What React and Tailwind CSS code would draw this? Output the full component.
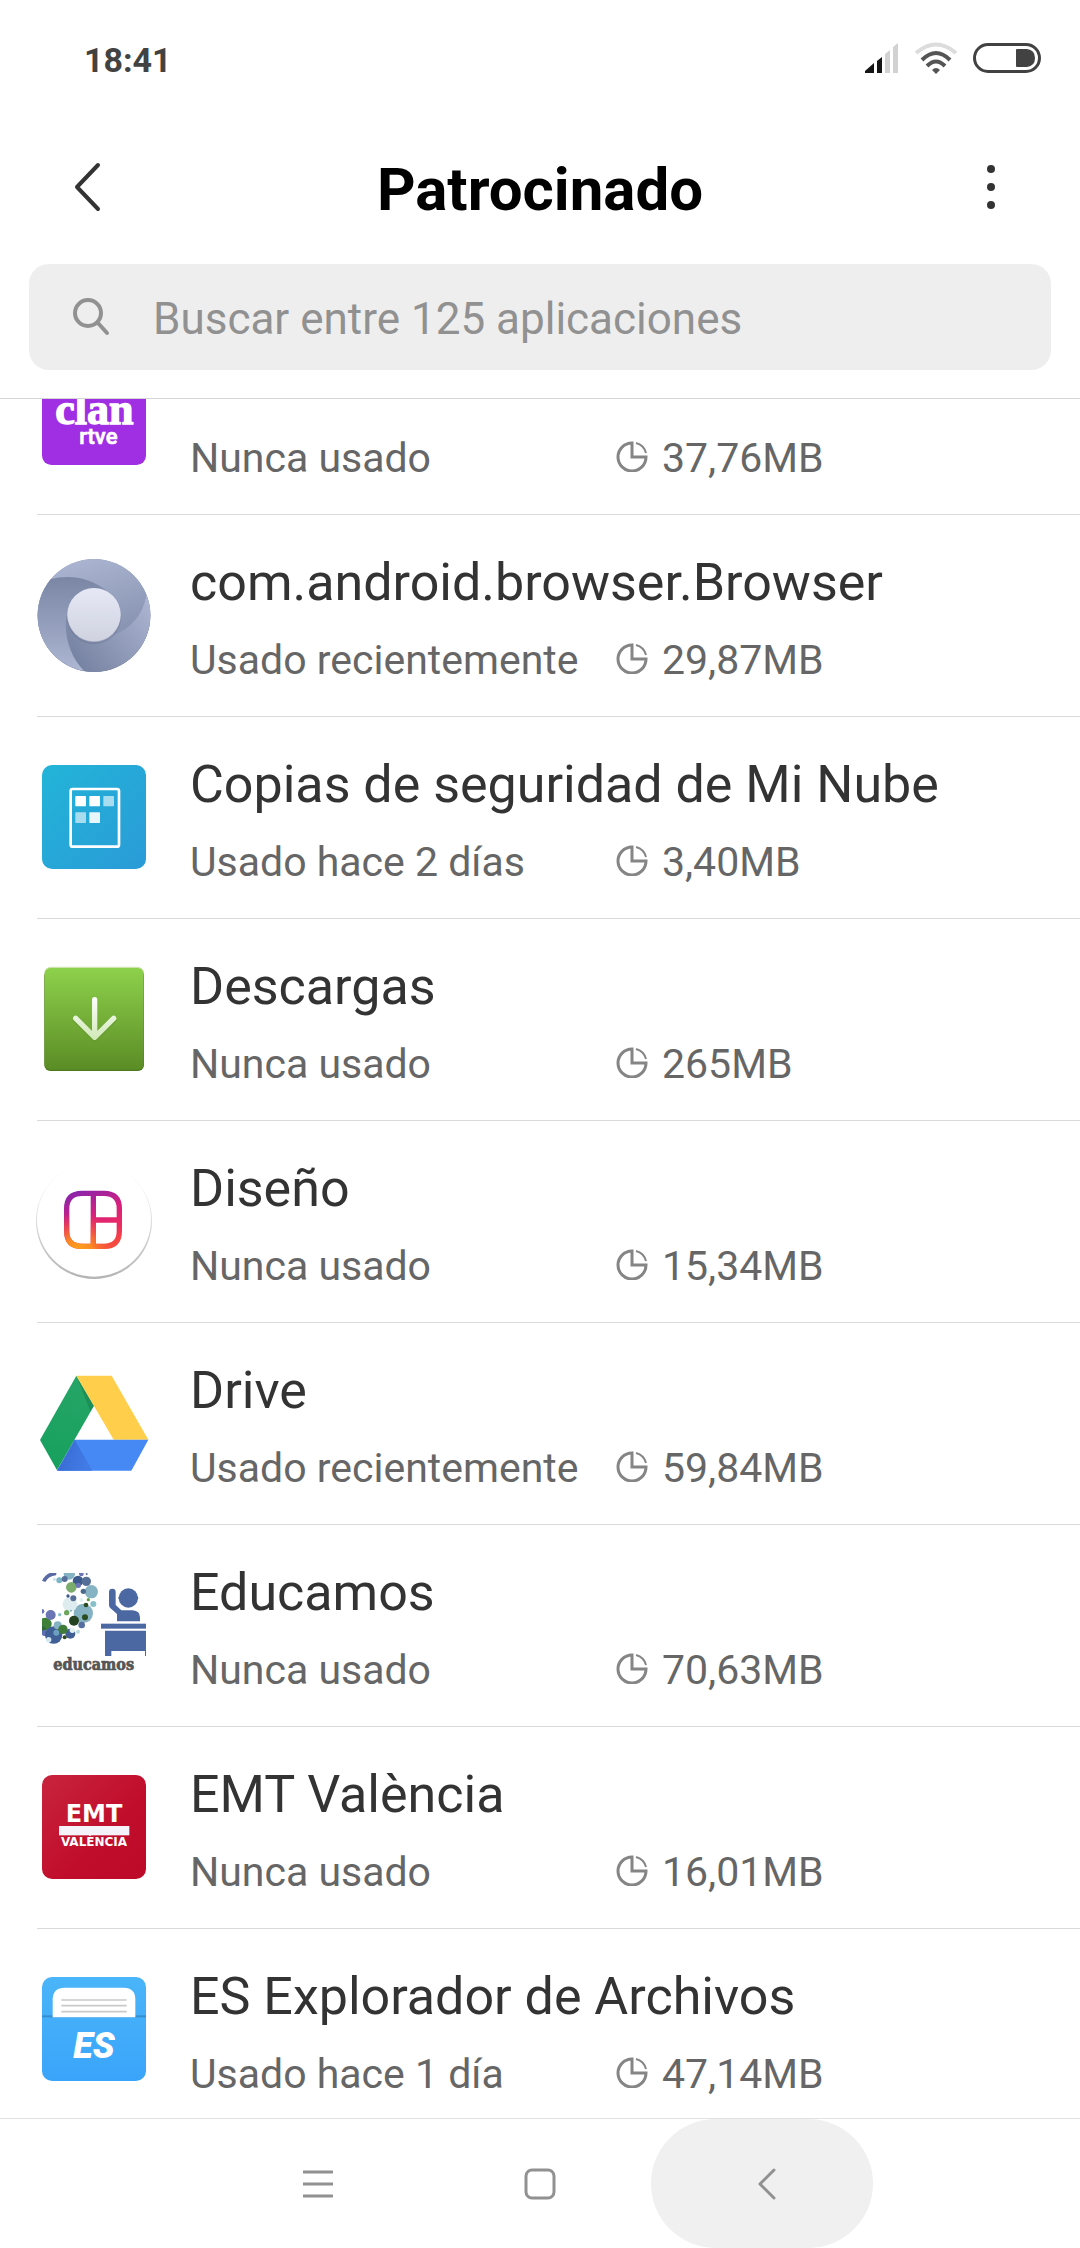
import React from "react";

function AppIcon({ viewBox, children }) {
  return (
    <svg viewBox={viewBox} className="mt-[42px] h-[117px] w-[114px] shrink-0 overflow-visible" aria-hidden="true">
      {children}
    </svg>
  );
}

function ClanIcon() {
  return (
    <AppIcon viewBox="111 -75 342 351">
      <rect x="126" y="-57" width="312" height="312" rx="28" fill="#a02fe4" />
      <text x="283" y="132" textAnchor="middle" fontSize="132" fontWeight="700" fill="#fff" stroke="#fff" strokeWidth="4" fontFamily="'Liberation Serif', serif">clan</text>
      <text x="295" y="193" textAnchor="middle" fontSize="66" fontWeight="500" fill="#fff" stroke="#fff" strokeWidth="2" fontFamily="Roboto, sans-serif">rtve</text>
    </AppIcon>
  );
}

function BrowserIcon() {
  return (
    <AppIcon viewBox="111 531 342 351">
      <defs>
        <linearGradient id="brTop" x1="0" y1="0" x2="0.3" y2="1">
          <stop offset="0" stopColor="#b0bad6" />
          <stop offset="1" stopColor="#7d89a8" />
        </linearGradient>
        <linearGradient id="brLeft" x1="0" y1="0" x2="0" y2="1">
          <stop offset="0" stopColor="#7a86a5" />
          <stop offset="1" stopColor="#aeb8d5" />
        </linearGradient>
        <linearGradient id="brRight" x1="1" y1="0" x2="0" y2="0.7">
          <stop offset="0" stopColor="#b0b9d6" />
          <stop offset="1" stopColor="#7682a1" />
        </linearGradient>
        <linearGradient id="brMid" x1="0" y1="0" x2="0" y2="1">
          <stop offset="0" stopColor="#e6e9f5" />
          <stop offset="1" stopColor="#cfd2df" />
        </linearGradient>
        <clipPath id="brClip"><circle cx="282" cy="706" r="169" /></clipPath>
      </defs>
      <circle cx="282" cy="707" r="169" fill="#6d7998" />
      <g clipPath="url(#brClip)">
        <rect x="111" y="535" width="342" height="342" fill="url(#brTop)" />
        <path d="M440 640C432 700 395 748 330 770L195 700Q192 800 252 880L460 880L460 640Z" fill="url(#brRight)" />
        <path d="M148 598C210 582 265 592 318 630L282 706L200 706C188 770 212 830 252 872L100 880L100 620Z" fill="url(#brLeft)" />
      </g>
      <circle cx="282" cy="711" r="82" fill="#5c6887" opacity="0.25" />
      <circle cx="282" cy="706" r="80" fill="#aeb3c6" />
      <circle cx="282" cy="704" r="80" fill="url(#brMid)" />
    </AppIcon>
  );
}

function CloudBackupIcon() {
  return (
    <AppIcon viewBox="111 57 342 351">
      <defs>
        <linearGradient id="cbBg" x1="0" y1="0" x2="1" y2="1">
          <stop offset="0" stopColor="#22b4d8" />
          <stop offset="1" stopColor="#2a9bd7" />
        </linearGradient>
      </defs>
      <rect x="126" y="75" width="312" height="312" rx="30" fill="url(#cbBg)" />
      <rect x="212" y="147" width="145" height="173" rx="6" fill="none" stroke="#fff" strokeWidth="8" />
      <g fill="#fff">
        <rect x="226" y="168" width="32" height="31" rx="2" />
        <rect x="268" y="168" width="32" height="31" rx="2" />
        <rect x="310" y="168" width="32" height="31" rx="2" opacity="0.6" />
        <rect x="226" y="217" width="32" height="32" rx="2" opacity="0.6" />
        <rect x="268" y="217" width="32" height="32" rx="2" opacity="0.9" />
      </g>
    </AppIcon>
  );
}

function DownloadsIcon() {
  return (
    <AppIcon viewBox="111 663 342 351">
      <defs>
        <linearGradient id="dlBg" x1="0" y1="0" x2="0" y2="1">
          <stop offset="0" stopColor="#8ed14b" />
          <stop offset="1" stopColor="#5b8c25" />
        </linearGradient>
        <linearGradient id="dlArrow" gradientUnits="userSpaceOnUse" x1="0" y1="770" x2="0" y2="902">
          <stop offset="0" stopColor="#ffffff" />
          <stop offset="1" stopColor="#cfe8b5" />
        </linearGradient>
      </defs>
      <rect x="133" y="680" width="299" height="312" rx="20" fill="#cfe3b0" />
      <rect x="133" y="690" width="299" height="303" rx="18" fill="#4c7a1c" />
      <rect x="134" y="684" width="297" height="305" rx="17" fill="url(#dlBg)" />
      <g fill="none" strokeWidth="16" strokeLinecap="round" strokeLinejoin="round">
        <path d="M284 782V892M227 840L284 896L341 840" stroke="#4c7a1c" opacity="0.3" />
        <path d="M284 779V892M227 835L284 892L341 835" stroke="url(#dlArrow)" />
      </g>
    </AppIcon>
  );
}

function LayoutIcon() {
  return (
    <AppIcon viewBox="111 69 342 351">
      <defs>
        <linearGradient id="loShade" x1="0" y1="0" x2="0" y2="1">
          <stop offset="0" stopColor="#f0f0f0" />
          <stop offset="0.5" stopColor="#dcdcdc" />
          <stop offset="1" stopColor="#b4b4b4" />
        </linearGradient>
        <linearGradient id="loA" gradientUnits="userSpaceOnUse" x1="235" y1="155" x2="300" y2="325">
          <stop offset="0" stopColor="#8c24aa" />
          <stop offset="0.45" stopColor="#d8207c" />
          <stop offset="0.75" stopColor="#ec2a62" />
          <stop offset="1" stopColor="#f5483f" />
        </linearGradient>
        <radialGradient id="loB" gradientUnits="userSpaceOnUse" cx="235" cy="335" r="120">
          <stop offset="0" stopColor="#ffa51c" />
          <stop offset="0.35" stopColor="#fb8a22" />
          <stop offset="1" stopColor="#f5483f" stopOpacity="0" />
        </radialGradient>
      </defs>
      <circle cx="282" cy="243" r="174" fill="url(#loShade)" />
      <circle cx="282" cy="239" r="171" fill="#fff" />
      {["url(#loA)", "url(#loB)"].map((stroke) => (
        <path key={stroke} d="M246 160H312Q358 160 358 206V273Q358 319 312 319H246Q200 319 200 273V206Q200 160 246 160ZM280 160V319M280 240H358" fill="none" stroke={stroke} strokeWidth="16" />
      ))}
    </AppIcon>
  );
}

function DriveIcon() {
  return (
    <AppIcon viewBox="111 675 342 351">
      <defs>
        <linearGradient id="drG" x1="0.5" y1="0" x2="0.3" y2="1">
          <stop offset="0" stopColor="#25a567" />
          <stop offset="1" stopColor="#17a05d" />
        </linearGradient>
        <linearGradient id="drShade" x1="0" y1="0" x2="1" y2="0.3">
          <stop offset="0" stopColor="#3768cf" />
          <stop offset="1" stopColor="#427be6" />
        </linearGradient>
      </defs>
      <path d="M229 707L120 900L171 991L282 797Z" fill="url(#drG)" />
      <path d="M229 707L282 797L271 814Z" fill="#146b43" opacity="0.35" />
      <path d="M229 707H335L445 899H341Z" fill="#ffcf4c" />
      <path d="M224 899H445L394 992H171Z" fill="#4688f4" />
      <path d="M224 899L277 992H171Z" fill="url(#drShade)" />
    </AppIcon>
  );
}

const bubbles = [
  [190, 190, 29, "#86b3c3"], [214, 125, 20, "#86b3c3"], [150, 163, 22, "#deebef"], [174, 93, 16, "#3c5a8c"],
  [199, 94, 14, "#566f98"], [148, 72, 17, "#86b3c3"], [154, 112, 16, "#7cab6e"], [118, 91, 9, "#7db5c4"],
  [134, 87, 9, "#566f98"], [175, 106, 8, "#6b74b4"], [184, 72, 7, "#6b74b4"], [190, 124, 8, "#4c6b8c"],
  [160, 145, 9, "#566f98"], [144, 138, 5, "#3c5a8c"], [220, 162, 9, "#86c0c9"], [198, 165, 7, "#2c4c20"],
  [205, 149, 5, "#5fa045"], [140, 188, 8, "#6da55a"], [119, 194, 5, "#86c0c9"], [92, 195, 15, "#6b74b4"],
  [195, 202, 9, "#2c4c20"], [185, 225, 10, "#566fa0"], [151, 251, 15, "#3f5f96"], [101, 255, 26, "#3f5f96"],
  [113, 226, 12, "#86b3c3"], [174, 245, 6, "#b9dcdf"], [109, 248, 9, "#6d9fc0"], [129, 238, 14, "#3f7a38"],
  [162, 212, 15, "#254220"], [134, 262, 6, "#2c4c20"], [86, 269, 8, "#d5e8f2"], [157, 241, 8, "#e3f0f0"],
  [184, 150, 6, "#e3f0f0"], [153, 182, 3, "#7db5c4"], [103, 88, 5, "#cfe6ec"], [200, 72, 3, "#566f98"],
];

function EducamosIcon() {
  return (
    <AppIcon viewBox="51 51 342 351">
      <defs>
        <clipPath id="edClip"><rect x="66" y="69" width="312" height="312" /></clipPath>
      </defs>
      <g clipPath="url(#edClip)">
        <circle cx="76" cy="222" r="19" fill="#3f8038" />
        <circle cx="67" cy="240" r="11" fill="#2f6b3a" />
        <circle cx="74" cy="249" r="9" fill="#5f6fb4" />
        <circle cx="66" cy="184" r="7" fill="#6b74b4" />
        <path d="M66 92Q80 64 110 66L108 76Q86 78 76 96Z" fill="#5a6aa4" />
        {bubbles.map(([x, y, r, fill]) => (
          <circle key={`${x}-${y}`} cx={x} cy={y} r={r} fill={fill} />
        ))}
        <g fill="#4c68a2">
          <circle cx="325" cy="144" r="29" />
          <circle cx="300" cy="144" r="5" />
          <circle cx="350" cy="144" r="5" />
          <path d="M267 126Q267 116 277 116Q287 116 287 126V165L304 181H338Q360 183 360 202V214H291V192L270 173Q267 170 267 165Z" />
          <rect x="243" y="221" width="136" height="15" />
          <path d="M255 242H378V318H375V303H274V318H255Z" />
        </g>
      </g>
      <text x="221" y="359" textAnchor="middle" fontSize="48" fontWeight="700" fill="#555" stroke="#555" strokeWidth="2" fontFamily="'DejaVu Serif Condensed', 'Liberation Serif', serif">educamos</text>
    </AppIcon>
  );
}

function EmtIcon() {
  return (
    <AppIcon viewBox="51 57 342 351">
      <defs>
        <linearGradient id="emBg" x1="0" y1="0" x2="1" y2="1">
          <stop offset="0" stopColor="#c8243e" />
          <stop offset="0.6" stopColor="#c00d2b" />
          <stop offset="1" stopColor="#bd0a28" />
        </linearGradient>
      </defs>
      <rect x="66" y="75" width="312" height="312" rx="30" fill="url(#emBg)" />
      <text x="222" y="216" textAnchor="middle" fontSize="72" fontWeight="700" fill="#fff" fontFamily="'DejaVu Sans', sans-serif">EMT</text>
      <rect x="117" y="228" width="211" height="28" fill="#f5f3fa" />
      <text x="222" y="289" textAnchor="middle" fontSize="36" fontWeight="700" fill="#fff" fontFamily="'DejaVu Sans', sans-serif">VALÈNCIA</text>
    </AppIcon>
  );
}

function EsIcon() {
  return (
    <AppIcon viewBox="51 63 342 351">
      <defs>
        <linearGradient id="esBg" x1="0" y1="0" x2="0" y2="1">
          <stop offset="0" stopColor="#4ab5f9" />
          <stop offset="1" stopColor="#3aa4fa" />
        </linearGradient>
      </defs>
      <rect x="66" y="81" width="312" height="312" rx="30" fill="url(#esBg)" />
      <rect x="66" y="196" width="312" height="6" fill="#348fd2" />
      <path d="M98 202V146Q100 113 134 113H312Q345 114 346 146V202Z" fill="#fff" />
      <path d="M124 150H320M124 167H320M124 185H320" stroke="#c9c9c9" strokeWidth="5" />
      <text x="222" y="325" textAnchor="middle" fontSize="108" fontWeight="900" fontStyle="italic" fill="#fff" fontFamily="Roboto, sans-serif">ES</text>
    </AppIcon>
  );
}

const apps = [
  { used: "Nunca usado", size: "37,76MB", Icon: ClanIcon },
  { name: "com.android.browser.Browser", used: "Usado recientemente", size: "29,87MB", Icon: BrowserIcon },
  { name: "Copias de seguridad de Mi Nube", used: "Usado hace 2 días", size: "3,40MB", Icon: CloudBackupIcon },
  { name: "Descargas", used: "Nunca usado", size: "265MB", Icon: DownloadsIcon },
  { name: "Diseño", used: "Nunca usado", size: "15,34MB", Icon: LayoutIcon },
  { name: "Drive", used: "Usado recientemente", size: "59,84MB", Icon: DriveIcon },
  { name: "Educamos", used: "Nunca usado", size: "70,63MB", Icon: EducamosIcon },
  { name: "EMT València", used: "Nunca usado", size: "16,01MB", Icon: EmtIcon },
  { name: "ES Explorador de Archivos", used: "Usado hace 1 día", size: "47,14MB", Icon: EsIcon },
];

function PieIcon() {
  return (
    <svg viewBox="0 0 32 32" className="mb-1 h-8 w-8 shrink-0" fill="none" stroke="#858585" strokeWidth="3" aria-hidden="true">
      <path d="M16 3A14 14 0 1 0 30 17H16Z" />
      <path d="M20 3A14 14 0 0 1 30 13" strokeWidth="2" />
    </svg>
  );
}

function AppRow({ name, used, size, Icon }) {
  return (
    <li className="ml-[37px] flex h-[202px] gap-[39px] border-b border-[#d9d9d9]">
      <Icon />
      <div className="flex min-w-0 flex-1 flex-col justify-end gap-[23px] pb-8">
        {name && <h2 className="truncate text-[52px] leading-[60px] text-[#333]">{name}</h2>}
        <div className="flex items-center text-[41px] leading-[48px] text-[#666]">
          <span className="w-[426px] shrink-0 whitespace-nowrap">{used}</span>
          <PieIcon />
          <span className="ml-[14px]">{size}</span>
        </div>
      </div>
    </li>
  );
}

function StatusBar() {
  return (
    <div className="flex h-[116px] shrink-0 items-center justify-between pl-[84px] pr-[39px]">
      <time className="pt-1 text-[34px] font-bold leading-10 text-[#424242]">18:41</time>
      <div className="flex items-center">
        <svg viewBox="0 0 34 30" className="mr-4 h-[30px] w-[34px]" aria-label="Señal móvil">
          <path d="M0 30V28L9 20V30Z" fill="#151515" />
          <path d="M12 30V18L17 14V30Z" fill="#151515" />
          <path d="M20 30V11L25 7V30Z" fill="#d2d2d2" />
          <path d="M28 30V4L33 0V30Z" fill="#d2d2d2" />
        </svg>
        <svg viewBox="0 0 42 32" className="mr-4 h-8 w-[42px]" fill="none" strokeWidth="4" aria-label="Wi-Fi">
          <path d="M1 11Q21 -6 41 11" stroke="#dcdcdc" />
          <path d="M7 18Q21 4 35 18" stroke="#555" />
          <path d="M12 24Q21 15 30 24" stroke="#555" />
          <path d="M17 28Q21 24 25 28L21 32Z" fill="#555" />
        </svg>
        <svg viewBox="0 0 68 30" className="h-[30px] w-[68px]" aria-label="Batería">
          <rect x="1.500" y="1.500" width="65" height="27" rx="13.500" fill="none" stroke="#424242" strokeWidth="3" />
          <path d="M44 6H54Q62 7 62 15Q62 23 54 24H44Q43 24 43 23V7Q43 6 44 6Z" fill="#424242" />
        </svg>
      </div>
    </div>
  );
}

export default function App() {
  return (
    <div className="flex h-screen flex-col overflow-hidden bg-white font-[Roboto,sans-serif]">
      <StatusBar />
      <header className="shrink-0 border-b border-[#d4d4d4]">
        <div className="flex h-[148px] items-center justify-between px-[70px]">
          <button type="button" aria-label="Atrás" className="flex w-12 justify-start pb-1.5">
            <svg viewBox="0 0 36 50" className="h-[50px] w-9" fill="none" stroke="#333" strokeWidth="4" strokeLinecap="round" strokeLinejoin="round">
              <path d="M28 3L7 25L28 47" />
            </svg>
          </button>
          <h1 className="text-[60px] font-bold leading-[72px] text-black">Patrocinado</h1>
          <button type="button" aria-label="Más opciones" className="flex w-12 justify-end pb-1.5">
            <svg viewBox="0 0 46 46" className="h-[46px] w-[46px]" fill="#333">
              <circle cx="27" cy="5" r="4" />
              <circle cx="27" cy="23" r="4" />
              <circle cx="27" cy="41" r="4" />
            </svg>
          </button>
        </div>
        <label className="mx-[29px] mb-7 flex h-[106px] items-center rounded-[20px] bg-[#eee] pl-11">
          <svg viewBox="0 0 38 38" className="h-[38px] w-[38px] shrink-0" fill="none" stroke="#919191" strokeWidth="4" strokeLinecap="round" aria-hidden="true">
            <circle cx="15" cy="15" r="13" />
            <path d="M25 25L34 35" />
          </svg>
          <input
            type="search"
            aria-label="Buscar aplicaciones"
            placeholder="Buscar entre 125 aplicaciones"
            className="ml-[42px] h-full min-w-0 flex-1 bg-transparent pt-1 text-[44px] text-[#333] outline-none placeholder:text-[#919191]"
          />
        </label>
      </header>
      <main className="min-h-0 flex-1 overflow-hidden">
        <ul className="-mt-[86px]">
          {apps.map((app) => (
            <AppRow key={app.size} {...app} />
          ))}
        </ul>
      </main>
      <nav className="flex h-[130px] shrink-0 justify-center border-t border-[#e2e2e2]">
        <button type="button" aria-label="Recientes" className="flex w-[222px] items-center justify-center">
          <svg viewBox="0 0 32 32" className="h-8 w-8" stroke="#919191" strokeWidth="3">
            <path d="M1 4H31M1 16H31M1 28H31" />
          </svg>
        </button>
        <button type="button" aria-label="Inicio" className="flex w-[222px] items-center justify-center">
          <svg viewBox="0 0 32 32" className="h-8 w-8" fill="none" stroke="#919191" strokeWidth="3">
            <rect x="2" y="2" width="28" height="28" rx="6" />
          </svg>
        </button>
        <button type="button" aria-label="Volver" className="flex w-[222px] items-center justify-center rounded-full bg-[#f0f0f0]">
          <svg viewBox="0 0 32 32" className="h-8 w-8" fill="none" stroke="#919191" strokeWidth="3" strokeLinecap="round" strokeLinejoin="round">
            <path d="M28 2L14 16L28 30" />
          </svg>
        </button>
      </nav>
    </div>
  );
}
